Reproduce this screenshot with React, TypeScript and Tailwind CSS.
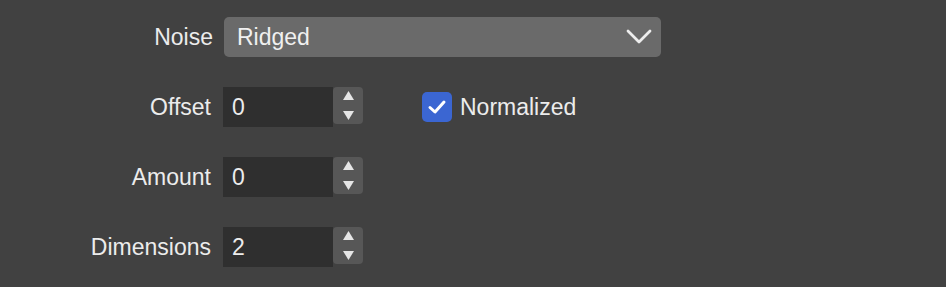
const font = { fontFamily: '"Liberation Sans", Arial, sans-serif' };

function Stepper() {
  return (
    <div className="w-[30px] h-[37px] self-start rounded-[4px] bg-[#575757] flex flex-col items-center justify-center gap-[11px]">
      <svg width="11" height="9" viewBox="0 0 11 9">
        <polygon points="5.5,0 11,9 0,9" fill="#e6e6e6" />
      </svg>
      <svg width="11" height="9" viewBox="0 0 11 9">
        <polygon points="0,0 11,0 5.5,9" fill="#e6e6e6" />
      </svg>
    </div>
  );
}

function NumberField({ value }: { value: string }) {
  return (
    <div className="flex items-start h-10">
      <div className="w-[110px] h-10 bg-[#2f2f2f] flex items-center pl-[9px] text-[23px] text-[#ececec]">
        {value}
      </div>
      <Stepper />
    </div>
  );
}

function Label({ children }: { children: string }) {
  return (
    <div className="w-[213px] pr-[2px] text-right text-[23px] text-[#ececec] leading-none">{children}</div>
  );
}

export default function App() {
  return (
    <div className="w-[946px] h-[287px] bg-[#414141] pt-[17px] flex flex-col gap-[30px]" style={font}>
      {/* Noise */}
      <div className="flex items-center h-10 gap-[11px]">
        <div className="w-[213px] text-right text-[23px] text-[#ececec] leading-none">Noise</div>
        <div className="w-[437px] h-10 rounded-[5px] bg-[#6a6a6a] flex items-center justify-between pl-[13px] pr-[10px]">
          <span className="text-[23px] text-[#f0f0f0]">Ridged</span>
          <svg width="26" height="16" viewBox="0 0 26 16" className="mr-[-1px]">
            <polyline points="2,2 13,13 24,2" fill="none" stroke="#ededed" strokeWidth="2.8" strokeLinecap="round" strokeLinejoin="round" />
          </svg>
        </div>
      </div>

      {/* Offset */}
      <div className="flex items-center h-10 gap-[10px]">
        <Label>Offset</Label>
        <NumberField value="0" />
        <div className="ml-[49px] flex items-center gap-2">
          <div className="w-[30px] h-[30px] rounded-[5px] bg-[#3b66d2] flex items-center justify-center">
            <svg width="20" height="16" viewBox="0 0 20 16">
              <polyline points="3,8.5 8,13 17,3" fill="none" stroke="#ffffff" strokeWidth="3" strokeLinecap="round" strokeLinejoin="round" />
            </svg>
          </div>
          <span className="text-[23px] text-[#ececec]">Normalized</span>
        </div>
      </div>

      {/* Amount */}
      <div className="flex items-center h-10 gap-[10px]">
        <Label>Amount</Label>
        <NumberField value="0" />
      </div>

      {/* Dimensions */}
      <div className="flex items-center h-10 gap-[10px]">
        <Label>Dimensions</Label>
        <NumberField value="2" />
      </div>
    </div>
  );
}
